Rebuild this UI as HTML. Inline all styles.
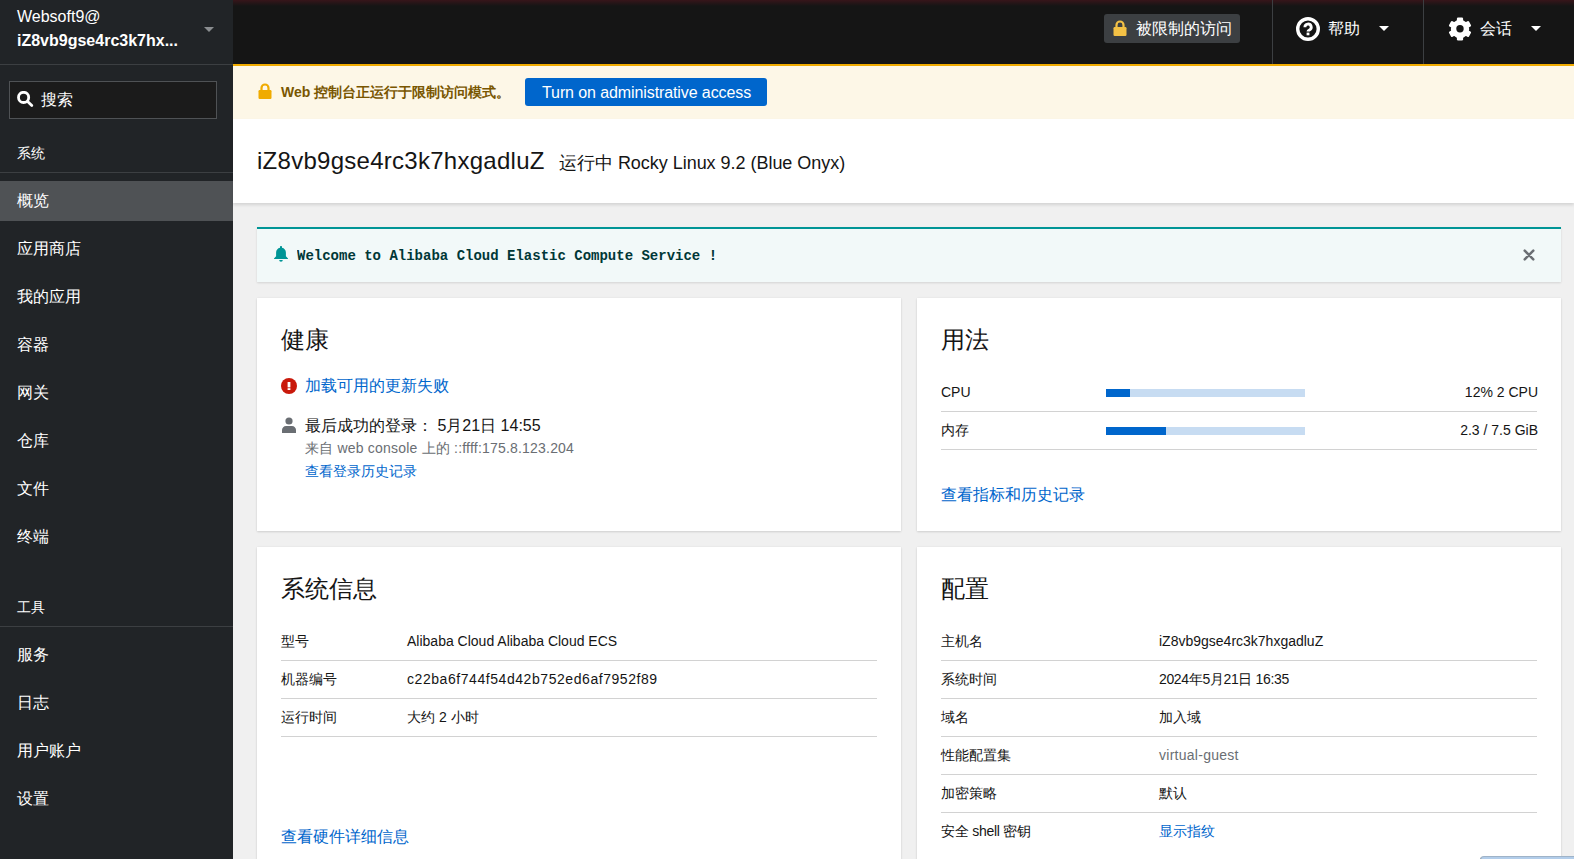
<!DOCTYPE html>
<html><head><meta charset="utf-8">
<style>
*{box-sizing:border-box;margin:0;padding:0}
html,body{width:1574px;height:859px;overflow:hidden;background:#f0f0f0;font-family:"Liberation Sans",sans-serif;color:#151515}
.a{position:absolute;white-space:nowrap}
#side{position:absolute;left:0;top:0;width:233px;height:859px;background:#212427}
#hdr{position:absolute;left:233px;top:0;width:1341px;height:64px;background:#151515}
#glow{position:absolute;left:233px;top:0;width:1341px;height:6px;background:linear-gradient(#37151a,#151515)}
.nav{position:absolute;left:17px;color:#fff;font-size:16px;line-height:20px}
.sec{position:absolute;left:17px;color:#fff;font-size:14px;line-height:18px}
.card{position:absolute;background:#fff;box-shadow:0 1px 2px rgba(3,3,3,.12),0 0 2px rgba(3,3,3,.06)}
.lbl{font-size:14px;line-height:18px;color:#151515}
.val{font-size:14px;line-height:18px;color:#151515}
.hr{position:absolute;height:1px;background:#d2d2d2}
.link{color:#0066cc}
</style></head><body>
<!-- sidebar -->
<div id="side"></div>
<div class="a" style="left:17px;top:7px;color:#fff;font-size:16px;line-height:20px">Websoft9@</div>
<div class="a" style="left:17px;top:31px;color:#fff;font-size:16px;line-height:20px;font-weight:bold">iZ8vb9gse4rc3k7hx...</div>
<div class="a" style="left:204px;top:27px;width:0;height:0;border-left:5px solid transparent;border-right:5px solid transparent;border-top:5px solid #8a8d90"></div>
<div class="a" style="left:0;top:64px;width:233px;height:1px;background:#3c3f42"></div>
<div class="a" style="left:9px;top:81px;width:208px;height:38px;background:#1b1b1b;border:1px solid #4f5255"></div>
<svg class="a" style="left:17px;top:91px" width="18" height="18" viewBox="0 0 18 18"><circle cx="6.6" cy="6.4" r="5.1" fill="none" stroke="#fff" stroke-width="2.8"/><path d="M10.6 10.4 L14.8 14.6" stroke="#fff" stroke-width="2.8" stroke-linecap="round"/></svg>
<div class="a" style="left:41px;top:90px;color:#fff;font-size:16px;line-height:20px">搜索</div>
<div class="sec" style="top:144px">系统</div>
<div class="a" style="left:0;top:172px;width:233px;height:1px;background:#3c3f42"></div>
<div class="a" style="left:0;top:181px;width:233px;height:40px;background:#4f5255"></div>
<div class="nav" style="top:191px">概览</div>
<div class="nav" style="top:239px">应用商店</div>
<div class="nav" style="top:287px">我的应用</div>
<div class="nav" style="top:335px">容器</div>
<div class="nav" style="top:383px">网关</div>
<div class="nav" style="top:431px">仓库</div>
<div class="nav" style="top:479px">文件</div>
<div class="nav" style="top:527px">终端</div>
<div class="sec" style="top:598px">工具</div>
<div class="a" style="left:0;top:626px;width:233px;height:1px;background:#3c3f42"></div>
<div class="nav" style="top:645px">服务</div>
<div class="nav" style="top:693px">日志</div>
<div class="nav" style="top:741px">用户账户</div>
<div class="nav" style="top:789px">设置</div>

<!-- header -->
<div id="hdr"></div>
<div id="glow"></div>
<div class="a" style="left:1104px;top:14px;width:136px;height:29px;background:#3c3f42;border-radius:3px"></div>
<svg class="a" style="left:1113px;top:20px" width="14" height="16" viewBox="0 0 14 16"><path d="M3.5 7V5a3.5 3.5 0 0 1 7 0v2" fill="none" stroke="#f4c145" stroke-width="2.2"/><rect x="0.5" y="7" width="13" height="9" rx="1.2" fill="#f4c145"/></svg>
<div class="a" style="left:1136px;top:19px;color:#fff;font-size:16px;line-height:20px">被限制的访问</div>
<div class="a" style="left:1272px;top:0;width:1px;height:64px;background:#3c3f42"></div>
<svg class="a" style="left:1296px;top:17px" width="24" height="24" viewBox="0 0 24 24"><circle cx="12" cy="12" r="10.3" fill="none" stroke="#fff" stroke-width="3.4"/><path d="M8.9 10.2a3.15 3.15 0 1 1 4.5 2.85c-.9.45-1.4.8-1.4 1.45v.1" fill="none" stroke="#fff" stroke-width="2.9"/><rect x="10.6" y="15.6" width="2.8" height="2.7" fill="#fff"/></svg>
<div class="a" style="left:1328px;top:19px;color:#fff;font-size:16px;line-height:20px">帮助</div>
<div class="a" style="left:1379px;top:26px;width:0;height:0;border-left:5px solid transparent;border-right:5px solid transparent;border-top:5px solid #fff"></div>
<div class="a" style="left:1423px;top:0;width:1px;height:64px;background:#3c3f42"></div>
<svg class="a" style="left:1448px;top:17px" width="24" height="24" viewBox="0 0 24 24"><g fill="#fff"><circle cx="12" cy="12" r="9.2"/><rect x="8.9" y="0.5" width="6.2" height="23" rx="1.2"/><rect x="8.9" y="0.5" width="6.2" height="23" rx="1.2" transform="rotate(60 12 12)"/><rect x="8.9" y="0.5" width="6.2" height="23" rx="1.2" transform="rotate(120 12 12)"/></g><circle cx="12" cy="11.8" r="3.7" fill="#151515"/></svg>
<div class="a" style="left:1480px;top:19px;color:#fff;font-size:16px;line-height:20px">会话</div>
<div class="a" style="left:1531px;top:26px;width:0;height:0;border-left:5px solid transparent;border-right:5px solid transparent;border-top:5px solid #fff"></div>

<!-- warning banner -->
<div class="a" style="left:233px;top:64px;width:1341px;height:55px;background:#fdf7e7;border-top:2px solid #f0ab00"></div>
<svg class="a" style="left:258px;top:83px" width="14" height="16" viewBox="0 0 14 16"><path d="M3.5 7V5a3.5 3.5 0 0 1 7 0v2" fill="none" stroke="#f0ab00" stroke-width="2.2"/><rect x="0.5" y="7" width="13" height="9" rx="1.2" fill="#f0ab00"/></svg>
<div class="a" style="left:281px;top:83px;color:#795600;font-size:14px;line-height:18px;font-weight:bold">Web 控制台正运行于限制访问模式。</div>
<div class="a" style="left:525px;top:78px;width:242px;height:28px;background:#0066cc;border-radius:3px"></div>
<div class="a" style="left:542px;top:83px;color:#fff;font-size:16px;line-height:20px;letter-spacing:-.1px">Turn on administrative access</div>

<!-- title -->
<div class="a" style="left:233px;top:119px;width:1341px;height:84px;background:#fff;box-shadow:0 2px 3px rgba(3,3,3,.12)"></div>
<div class="a" style="left:257px;top:147px;font-size:24px;line-height:28px;color:#151515;letter-spacing:.27px">iZ8vb9gse4rc3k7hxgadluZ</div>
<div class="a" style="left:559px;top:152px;font-size:18px;line-height:22px;color:#151515;letter-spacing:-.03px">运行中 Rocky Linux 9.2 (Blue Onyx)</div>

<!-- welcome alert -->
<div class="a" style="left:257px;top:227px;width:1304px;height:55px;background:#f2f9f9;border-top:2px solid #009596;box-shadow:0 1px 2px rgba(3,3,3,.12)"></div>
<svg class="a" style="left:274px;top:246px" width="14" height="16" viewBox="0 0 14 16"><path fill="#009596" d="M7 0c.6 0 1 .4 1 1v.7c2.3.4 3.9 2.4 3.9 4.8v3.7L14 12.5V13H0v-.5l2.1-2.3V6.5C2.1 4.1 3.7 2.1 6 1.7V1c0-.6.4-1 1-1zM5.2 14h3.6a1.8 1.8 0 0 1-3.6 0z"/></svg>
<div class="a" style="left:297px;top:247px;transform:scaleY(1.08);transform-origin:0 13px;font-family:'Liberation Mono',monospace;font-weight:bold;font-size:14px;line-height:18px;color:#003737">Welcome to Alibaba Cloud Elastic Compute Service !</div>
<svg class="a" style="left:1523px;top:249px" width="12" height="12" viewBox="0 0 12 12"><path d="M1.7 1.7L10.3 10.3M10.3 1.7L1.7 10.3" stroke="#6a6e73" stroke-width="2.5" stroke-linecap="round"/></svg>

<!-- health card -->
<div class="card" style="left:257px;top:298px;width:644px;height:233px"></div>
<div class="a" style="left:281px;top:325px;font-size:24px;line-height:30px">健康</div>
<svg class="a" style="left:281px;top:378px" width="16" height="16" viewBox="0 0 16 16"><circle cx="8" cy="8" r="8" fill="#c9190b"/><rect x="6.6" y="4" width="2.8" height="5.4" fill="#fff"/><rect x="6.6" y="10.2" width="2.8" height="1.8" fill="#fff"/></svg>
<div class="a link" style="left:305px;top:376px;font-size:16px;line-height:20px">加载可用的更新失败</div>
<svg class="a" style="left:282px;top:417px" width="14" height="16" viewBox="0 0 14 16"><circle cx="7" cy="4" r="3.6" fill="#6a6e73"/><path d="M0 16v-3c0-2.2 1.8-4 4-4h6c2.2 0 4 1.8 4 4v3z" fill="#6a6e73"/></svg>
<div class="a" style="left:305px;top:416px;font-size:16px;line-height:20px">最后成功的登录：&nbsp;5月21日 14:55</div>
<div class="a" style="left:305px;top:439px;font-size:14px;line-height:18px;color:#6a6e73;letter-spacing:.2px">来自 web console 上的 ::ffff:175.8.123.204</div>
<div class="a link" style="left:305px;top:462px;font-size:14px;line-height:18px">查看登录历史记录</div>

<!-- usage card -->
<div class="card" style="left:917px;top:298px;width:644px;height:233px"></div>
<div class="a" style="left:941px;top:325px;font-size:24px;line-height:30px">用法</div>
<div class="a lbl" style="left:941px;top:383px">CPU</div>
<div class="a" style="left:1106px;top:389px;width:199px;height:8px;background:#c7dcf2"><div style="width:24px;height:8px;background:#0066cc"></div></div>
<div class="a val" style="right:36px;top:383px">12% 2 CPU</div>
<div class="hr" style="left:941px;top:411px;width:596px"></div>
<div class="a lbl" style="left:941px;top:421px">内存</div>
<div class="a" style="left:1106px;top:427px;width:199px;height:8px;background:#c7dcf2"><div style="width:60px;height:8px;background:#0066cc"></div></div>
<div class="a val" style="right:36px;top:421px">2.3 / 7.5 GiB</div>
<div class="hr" style="left:941px;top:449px;width:596px"></div>
<div class="a link" style="left:941px;top:485px;font-size:16px;line-height:20px">查看指标和历史记录</div>

<!-- system info card -->
<div class="card" style="left:257px;top:547px;width:644px;height:330px"></div>
<div class="a" style="left:281px;top:574px;font-size:24px;line-height:30px">系统信息</div>
<div class="a lbl" style="left:281px;top:632px">型号</div>
<div class="a val" style="left:407px;top:632px">Alibaba Cloud Alibaba Cloud ECS</div>
<div class="hr" style="left:281px;top:660px;width:596px"></div>
<div class="a lbl" style="left:281px;top:670px">机器编号</div>
<div class="a val" style="left:407px;top:670px;letter-spacing:.56px">c22ba6f744f54d42b752ed6af7952f89</div>
<div class="hr" style="left:281px;top:698px;width:596px"></div>
<div class="a lbl" style="left:281px;top:708px">运行时间</div>
<div class="a val" style="left:407px;top:708px">大约 2 小时</div>
<div class="hr" style="left:281px;top:736px;width:596px"></div>
<div class="a link" style="left:281px;top:827px;font-size:16px;line-height:20px">查看硬件详细信息</div>

<!-- config card -->
<div class="card" style="left:917px;top:547px;width:644px;height:330px"></div>
<div class="a" style="left:941px;top:574px;font-size:24px;line-height:30px">配置</div>
<div class="a lbl" style="left:941px;top:632px">主机名</div>
<div class="a val" style="left:1159px;top:632px">iZ8vb9gse4rc3k7hxgadluZ</div>
<div class="hr" style="left:941px;top:660px;width:596px"></div>
<div class="a lbl" style="left:941px;top:670px">系统时间</div>
<div class="a val" style="left:1159px;top:670px;letter-spacing:-.35px">2024年5月21日 16:35</div>
<div class="hr" style="left:941px;top:698px;width:596px"></div>
<div class="a lbl" style="left:941px;top:708px">域名</div>
<div class="a val" style="left:1159px;top:708px">加入域</div>
<div class="hr" style="left:941px;top:736px;width:596px"></div>
<div class="a lbl" style="left:941px;top:746px">性能配置集</div>
<div class="a val" style="left:1159px;top:746px;color:#6a6e73;letter-spacing:.27px">virtual-guest</div>
<div class="hr" style="left:941px;top:774px;width:596px"></div>
<div class="a lbl" style="left:941px;top:784px">加密策略</div>
<div class="a val" style="left:1159px;top:784px">默认</div>
<div class="hr" style="left:941px;top:812px;width:596px"></div>
<div class="a lbl" style="left:941px;top:822px;letter-spacing:-.25px">安全 shell 密钥</div>
<div class="a val link" style="left:1159px;top:822px">显示指纹</div>
<div class="a" style="left:1480px;top:856px;width:100px;height:10px;background:linear-gradient(#b2cdea 0,#b2cdea 2px,#7fa5ce 2px);border-top:1px solid #9fb3c8;border-left:1px solid #8a98a6;border-radius:4px 0 0 0"></div>
</body></html>
